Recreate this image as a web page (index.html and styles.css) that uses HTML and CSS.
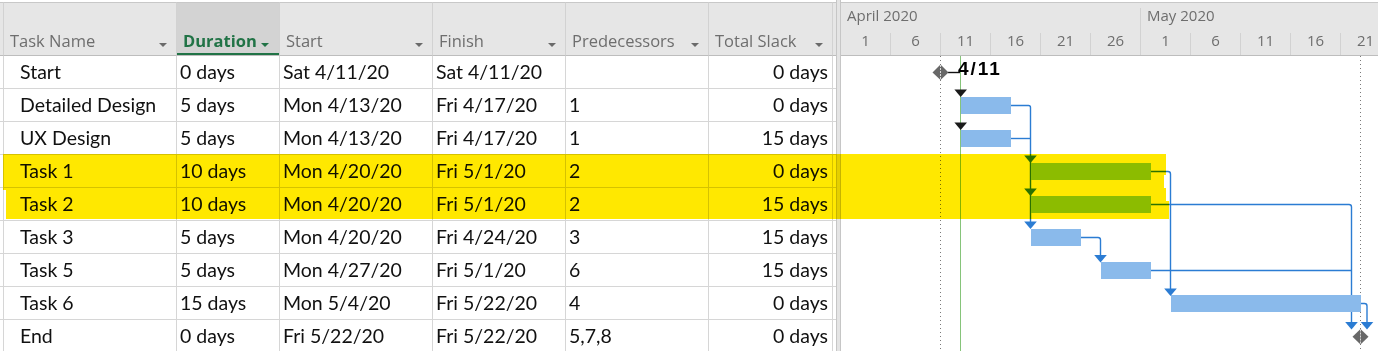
FILE: index.html
```html
<!DOCTYPE html>
<html lang="en">

<head>
    <meta charset="UTF-8">
    <title>Gantt Chart</title>
    <link rel="stylesheet" href="styles.css">
</head>

<body>
    <div class="view">
        <div class="sheet">
            <div class="cell head edge"></div>
            <div class="cell head"><span>Task Name</span><i class="caret"></i></div>
            <div class="cell head sorted"><span>Duration</span><i class="caret"></i></div>
            <div class="cell head"><span>Start</span><i class="caret"></i></div>
            <div class="cell head"><span>Finish</span><i class="caret"></i></div>
            <div class="cell head"><span>Predecessors</span><i class="caret"></i></div>
            <div class="cell head"><span>Total Slack</span><i class="caret"></i></div>
            <div class="cell head gap"></div>

            <div class="cell edge"></div><div class="cell name">Start</div><div class="cell">0 days</div><div class="cell">Sat 4/11/20</div><div class="cell">Sat 4/11/20</div><div class="cell"></div><div class="cell num">0 days</div><div class="cell gap"></div>
            <div class="cell edge"></div><div class="cell name">Detailed Design</div><div class="cell">5 days</div><div class="cell">Mon 4/13/20</div><div class="cell">Fri 4/17/20</div><div class="cell">1</div><div class="cell num">0 days</div><div class="cell gap"></div>
            <div class="cell edge"></div><div class="cell name">UX Design</div><div class="cell">5 days</div><div class="cell">Mon 4/13/20</div><div class="cell">Fri 4/17/20</div><div class="cell">1</div><div class="cell num">15 days</div><div class="cell gap"></div>
            <div class="cell edge"></div><div class="cell name">Task 1</div><div class="cell">10 days</div><div class="cell">Mon 4/20/20</div><div class="cell">Fri 5/1/20</div><div class="cell">2</div><div class="cell num">0 days</div><div class="cell gap"></div>
            <div class="cell edge"></div><div class="cell name">Task 2</div><div class="cell">10 days</div><div class="cell">Mon 4/20/20</div><div class="cell">Fri 5/1/20</div><div class="cell">2</div><div class="cell num">15 days</div><div class="cell gap"></div>
            <div class="cell edge"></div><div class="cell name">Task 3</div><div class="cell">5 days</div><div class="cell">Mon 4/20/20</div><div class="cell">Fri 4/24/20</div><div class="cell">3</div><div class="cell num">15 days</div><div class="cell gap"></div>
            <div class="cell edge"></div><div class="cell name">Task 5</div><div class="cell">5 days</div><div class="cell">Mon 4/27/20</div><div class="cell">Fri 5/1/20</div><div class="cell">6</div><div class="cell num">15 days</div><div class="cell gap"></div>
            <div class="cell edge"></div><div class="cell name">Task 6</div><div class="cell">15 days</div><div class="cell">Mon 5/4/20</div><div class="cell">Fri 5/22/20</div><div class="cell">4</div><div class="cell num">0 days</div><div class="cell gap"></div>
            <div class="cell edge"></div><div class="cell name">End</div><div class="cell">0 days</div><div class="cell">Fri 5/22/20</div><div class="cell">Fri 5/22/20</div><div class="cell">5,7,8</div><div class="cell num">0 days</div><div class="cell gap"></div>
        </div>

        <div class="splitter"></div>

        <div class="chart">
            <div class="timescale">
                <div class="months">
                    <div class="month april">April 2020</div>
                    <div class="month">May 2020</div>
                </div>
                <div class="days">
                    <div class="day">1</div>
                    <div class="day">6</div>
                    <div class="day">11</div>
                    <div class="day">16</div>
                    <div class="day">21</div>
                    <div class="day">26</div>
                    <div class="day">1</div>
                    <div class="day">6</div>
                    <div class="day">11</div>
                    <div class="day">16</div>
                    <div class="day">21</div>
                </div>
            </div>

            <!-- chart body, drawn in page coordinates -->
            <svg class="bars" width="537" height="295" viewBox="841 56 537 295">
                <line class="gridline" x1="940.5" y1="56" x2="940.5" y2="351" />
                <line class="gridline" x1="1360.5" y1="56" x2="1360.5" y2="351" />
                <line class="status" x1="960.5" y1="56" x2="960.5" y2="351" />

                <path class="link" d="M1011 105.5 H1028.5 Q1030.5 105.5 1030.5 107.5 V222" />
                <path class="link" d="M1011 138.5 H1030.5" />
                <path class="link" d="M1151 171.5 H1168 Q1170.5 171.5 1170.5 174 V289" />
                <path class="link" d="M1151 204.5 H1349 Q1351.5 204.5 1351.5 207 V323" />
                <path class="link" d="M1081 237.5 H1098 Q1100.5 237.5 1100.5 240 V256" />
                <path class="link" d="M1151 270.5 H1351.5" />
                <path class="link" d="M1361 303.5 H1364.5 Q1367 303.5 1367 306 V323" />
                <path class="link start" d="M948 72.5 H960" />

                <rect class="bar" x="961" y="97" width="50" height="17" />
                <rect class="bar" x="961" y="130" width="50" height="17" />
                <rect class="bar crit" x="1031" y="163" width="120" height="17" />
                <rect class="bar crit" x="1031" y="196" width="120" height="17" />
                <rect class="bar" x="1031" y="229" width="50" height="17" />
                <rect class="bar" x="1101" y="262" width="50" height="17" />
                <rect class="bar" x="1171" y="295" width="190" height="17" />

                <polygon class="arrow start" points="954.4,89.5 967,89.5 960.7,97" />
                <polygon class="arrow start" points="954.4,122.5 967,122.5 960.7,130" />
                <polygon class="arrow" points="1024.2,155.5 1036.8,155.5 1030.5,163" />
                <polygon class="arrow" points="1024.2,188.5 1036.8,188.5 1030.5,196" />
                <polygon class="arrow" points="1024.2,221.5 1036.8,221.5 1030.5,229" />
                <polygon class="arrow" points="1094.2,255 1106.8,255 1100.5,262.5" />
                <polygon class="arrow" points="1164.2,288.5 1176.8,288.5 1170.5,296" />
                <polygon class="arrow" points="1345.2,322 1357.8,322 1351.5,329.5" />
                <polygon class="arrow" points="1360.7,322 1373.3,322 1367,329.5" />

                <polygon class="milestone" points="940.5,64.5 948.5,72.5 940.5,80 932.5,72.5" />
                <line class="milestone-mark" x1="940.5" y1="65" x2="940.5" y2="80" />
                <text class="milestone-label" x="958" y="75">4/11</text>

                <polygon class="milestone" points="1360.5,329 1368.5,336.7 1360.5,344.5 1352.5,336.7" />
                <line class="milestone-mark" x1="1360.5" y1="329.5" x2="1360.5" y2="344" />
            </svg>
        </div>

        <div class="highlight"></div>
    </div>
</body>

</html>
```

FILE: styles.css
```css
:root {
    --head-bg: #e6e6e6;
    --head-line: #d2d2d2;
    --grid-line: #d6d6d6;
    --head-text: #6e6e6e;
    --accent: #217346;
    --bar: #8abaeb;
    --link: #2b7cd3;
}

html,
body {
    margin: 0;
    background: #fff;
}

body {
    font-family: Lato, "Liberation Sans", sans-serif;
    color: #111;
}

.view {
    position: relative;
    display: flex;
    height: 351px;
    overflow: hidden;
}

/* task sheet */
.sheet {
    display: grid;
    grid-template-columns: 4px 173px 103px 153px 133px 143px 124px 3px;
    grid-template-rows: 54px;
    grid-auto-rows: 33px;
    padding-top: 2px;
    width: 836px;
    flex-shrink: 0;
}

.cell {
    box-sizing: border-box;
    border-right: 1px solid var(--grid-line);
    border-bottom: 1px solid var(--grid-line);
    padding-left: 3px;
    font-size: 19.5px;
    line-height: 32px;
    white-space: nowrap;
    overflow: hidden;
}

.cell.name {
    padding-left: 16px;
}

.cell.num {
    text-align: right;
    padding-right: 4px;
}

.cell.edge {
    padding: 0;
}

.cell.gap {
    border-right: none;
    padding: 0;
}

.cell.head {
    display: flex;
    align-items: flex-end;
    padding: 0 9px 4px 6px;
    background: var(--head-bg);
    border-top: 1px solid #c8c8c8;
    border-right-color: var(--head-line);
    border-bottom-color: #bdbdbd;
    font-family: "Open Sans", "Noto Sans", sans-serif;
    font-size: 16.5px;
    line-height: 20px;
    color: var(--head-text);
}

.cell.head.edge,
.cell.head.gap {
    padding: 0;
}

.caret {
    margin-left: auto;
    margin-bottom: 4px;
    width: 0;
    height: 0;
    border-left: 4px solid transparent;
    border-right: 4px solid transparent;
    border-top: 4px solid #6a6a6a;
}

.cell.head.sorted {
    background: #d3d3d3;
    color: var(--accent);
    font-weight: 700;
    box-shadow: inset 0 -2px 0 var(--accent);
}

.cell.head.sorted .caret {
    margin-left: 4px;
    border-top-color: var(--accent);
}

.splitter {
    box-sizing: border-box;
    width: 5px;
    flex-shrink: 0;
    background: #e4e4e4;
    border-left: 1px solid #c6c6c6;
    border-right: 1px solid #c6c6c6;
}

/* gantt chart */
.chart {
    flex: 1;
    overflow: hidden;
    padding-top: 2px;
}

.timescale {
    background: var(--head-bg);
    border-top: 1px solid #c8c8c8;
    border-bottom: 1px solid #bdbdbd;
    font-family: "Open Sans", "Noto Sans", sans-serif;
    font-size: 15px;
    color: var(--head-text);
}

.months {
    display: flex;
    height: 30px;
    padding-top: 5px;
    box-sizing: border-box;
}

.month {
    padding-left: 6px;
    line-height: 14px;
    white-space: nowrap;
}

.month.april {
    box-sizing: border-box;
    width: 300px;
    flex-shrink: 0;
    border-right: 1px solid var(--head-line);
}

.days {
    display: flex;
    height: 22px;
}

.day {
    box-sizing: border-box;
    width: 50px;
    flex-shrink: 0;
    border-right: 1px solid var(--head-line);
    text-align: center;
    line-height: 15px;
}

.bars {
    display: block;
}

.gridline {
    stroke: #7a7a7a;
    stroke-width: 1;
    stroke-dasharray: 1 3;
}

.status {
    stroke: #86c47a;
    stroke-width: 1;
}

.link {
    fill: none;
    stroke: var(--link);
    stroke-width: 1.4;
}

.link.start {
    stroke: #111;
}

.bar {
    fill: var(--bar);
}

/* sits under the highlight, which multiplies it to green */
.bar.crit {
    fill: #8ccfeb;
}

.arrow {
    fill: var(--link);
}

.arrow.start {
    fill: #1a1a1a;
}

.milestone {
    fill: #686868;
}

.milestone-mark {
    stroke: #d8d8d8;
    stroke-width: 1;
    stroke-dasharray: 2 1;
}

.milestone-label {
    font-family: "Liberation Sans", Arial, sans-serif;
    font-weight: 700;
    font-size: 19px;
    letter-spacing: 2px;
    fill: #000;
}

/* marker highlight over Task 1 and Task 2 */
.highlight {
    position: absolute;
    left: 0;
    top: 154px;
    width: 1170px;
    height: 65px;
    background: #ffe800;
    mix-blend-mode: multiply;
    pointer-events: none;
    clip-path: polygon(3px 0, 1166px 0, 1166px 21px, 1164px 21px, 1164px 34px, 1166px 34px, 1166px 47px, 1169px 47px, 1169px 65px, 6px 65px, 6px 36px, 3px 36px);
}
```
